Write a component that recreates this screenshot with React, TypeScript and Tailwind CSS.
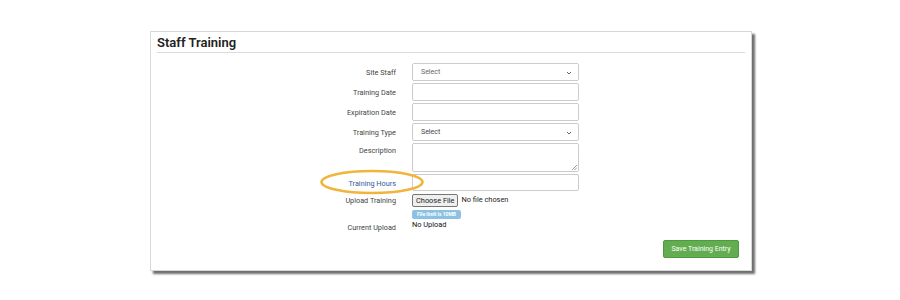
import React from "react";

const font = { fontFamily: "Roboto, 'Liberation Sans', sans-serif" };

function Chevron() {
  return (
    <svg width="6" height="4" viewBox="0 0 6 4" className="absolute right-[6px] top-[7px]">
      <path d="M1 1 L3 3 L5 1" fill="none" stroke="#666" strokeWidth="1" />
    </svg>
  );
}

function Label({ children, blue, pt = 5 }: { children: React.ReactNode; blue?: boolean; pt?: number }) {
  return (
    <div
      className={`w-[261px] shrink-0 pr-[16px] text-right text-[7.3px] leading-[9px] ${blue ? "text-[#2d5c9a]" : "text-[#444]"}`}
      style={{ paddingTop: pt }}
    >
      {children}
    </div>
  );
}

export default function App() {
  return (
    <div className="w-[900px] h-[300px] bg-white pt-[31px] pl-[150px]" style={font}>
      <div className="relative w-[602px] h-[240px] bg-white border border-[#d8d8d8] shadow-[3px_3px_2px_#6f6f6f]">
        <div className="mx-[6px] pt-[3px] pb-[2px] border-b border-[#dcdcdc] text-[13px] font-semibold leading-[15px] text-[#222]">
          Staff Training
        </div>
        <div className="pt-[10px]">
          <div className="flex mb-[2px]">
            <Label>Site Staff</Label>
            <div className="relative w-[167px] h-[18px] border border-[#ccc] rounded-[2px] text-[7px] text-[#666] pl-[8px] leading-[16px]">
              Select
              <Chevron />
            </div>
          </div>
          <div className="flex mb-[2px]">
            <Label>Training Date</Label>
            <div className="w-[167px] h-[18px] border border-[#ccc] rounded-[2px]" />
          </div>
          <div className="flex mb-[2px]">
            <Label>Expiration Date</Label>
            <div className="w-[167px] h-[18px] border border-[#ccc] rounded-[2px]" />
          </div>
          <div className="flex mb-[2px]">
            <Label>Training Type</Label>
            <div className="relative w-[167px] h-[18px] border border-[#ccc] rounded-[2px] text-[7px] text-[#444] pl-[8px] leading-[16px]">
              Select
              <Chevron />
            </div>
          </div>
          <div className="flex mb-[2px]">
            <Label pt={3}>Description</Label>
            <div className="relative w-[167px] h-[29px] border border-[#ccc] rounded-[2px]">
              <svg width="5" height="5" viewBox="0 0 5 5" className="absolute right-[1px] bottom-[1px]">
                <path d="M0 5 L5 0 M2.5 5 L5 2.5" stroke="#888" strokeWidth="0.8" />
              </svg>
            </div>
          </div>
          <div className="flex mb-[2px]">
            <div className="relative">
              <Label blue>Training Hours</Label>
              <svg width="108" height="28" viewBox="0 0 108 28" className="absolute left-[168px] top-[-6px]">
                <ellipse cx="53" cy="14" rx="50.5" ry="11" fill="none" stroke="#f1b43c" strokeWidth="2.6" />
              </svg>
            </div>
            <div className="w-[167px] h-[17px] border border-[#ccc] rounded-[2px]" />
          </div>
          <div className="flex">
            <Label pt={3}>Upload Training</Label>
            <div className="flex items-center h-[14px] text-[7.4px] text-[#222]">
              <div className="h-[13px] px-[3px] border border-[#767676] bg-[#efefef] rounded-[2px] leading-[11px]">
                Choose File
              </div>
              <span className="ml-[3px]">No file chosen</span>
            </div>
          </div>
          <div className="flex">
            <Label pt={16}>Current Upload</Label>
            <div className="pt-[3px]">
              <div className="w-[49px] h-[9px] rounded-[2px] bg-[#8bc2e3] text-white text-[5px] font-bold leading-[9px] text-center">
                File limit is 10MB
              </div>
              <div className="text-[7.4px] leading-[9px] text-[#111] mt-[1px]">No Upload</div>
            </div>
          </div>
          <div className="flex justify-end pr-[12px] mt-[8px]">
            <div className="w-[76px] h-[18px] bg-[#62ad4f] border border-[#4f9a3e] rounded-[2px] text-white text-[7px] leading-[16px] text-center">
              Save Training Entry
            </div>
          </div>
        </div>
      </div>
    </div>
  );
}
